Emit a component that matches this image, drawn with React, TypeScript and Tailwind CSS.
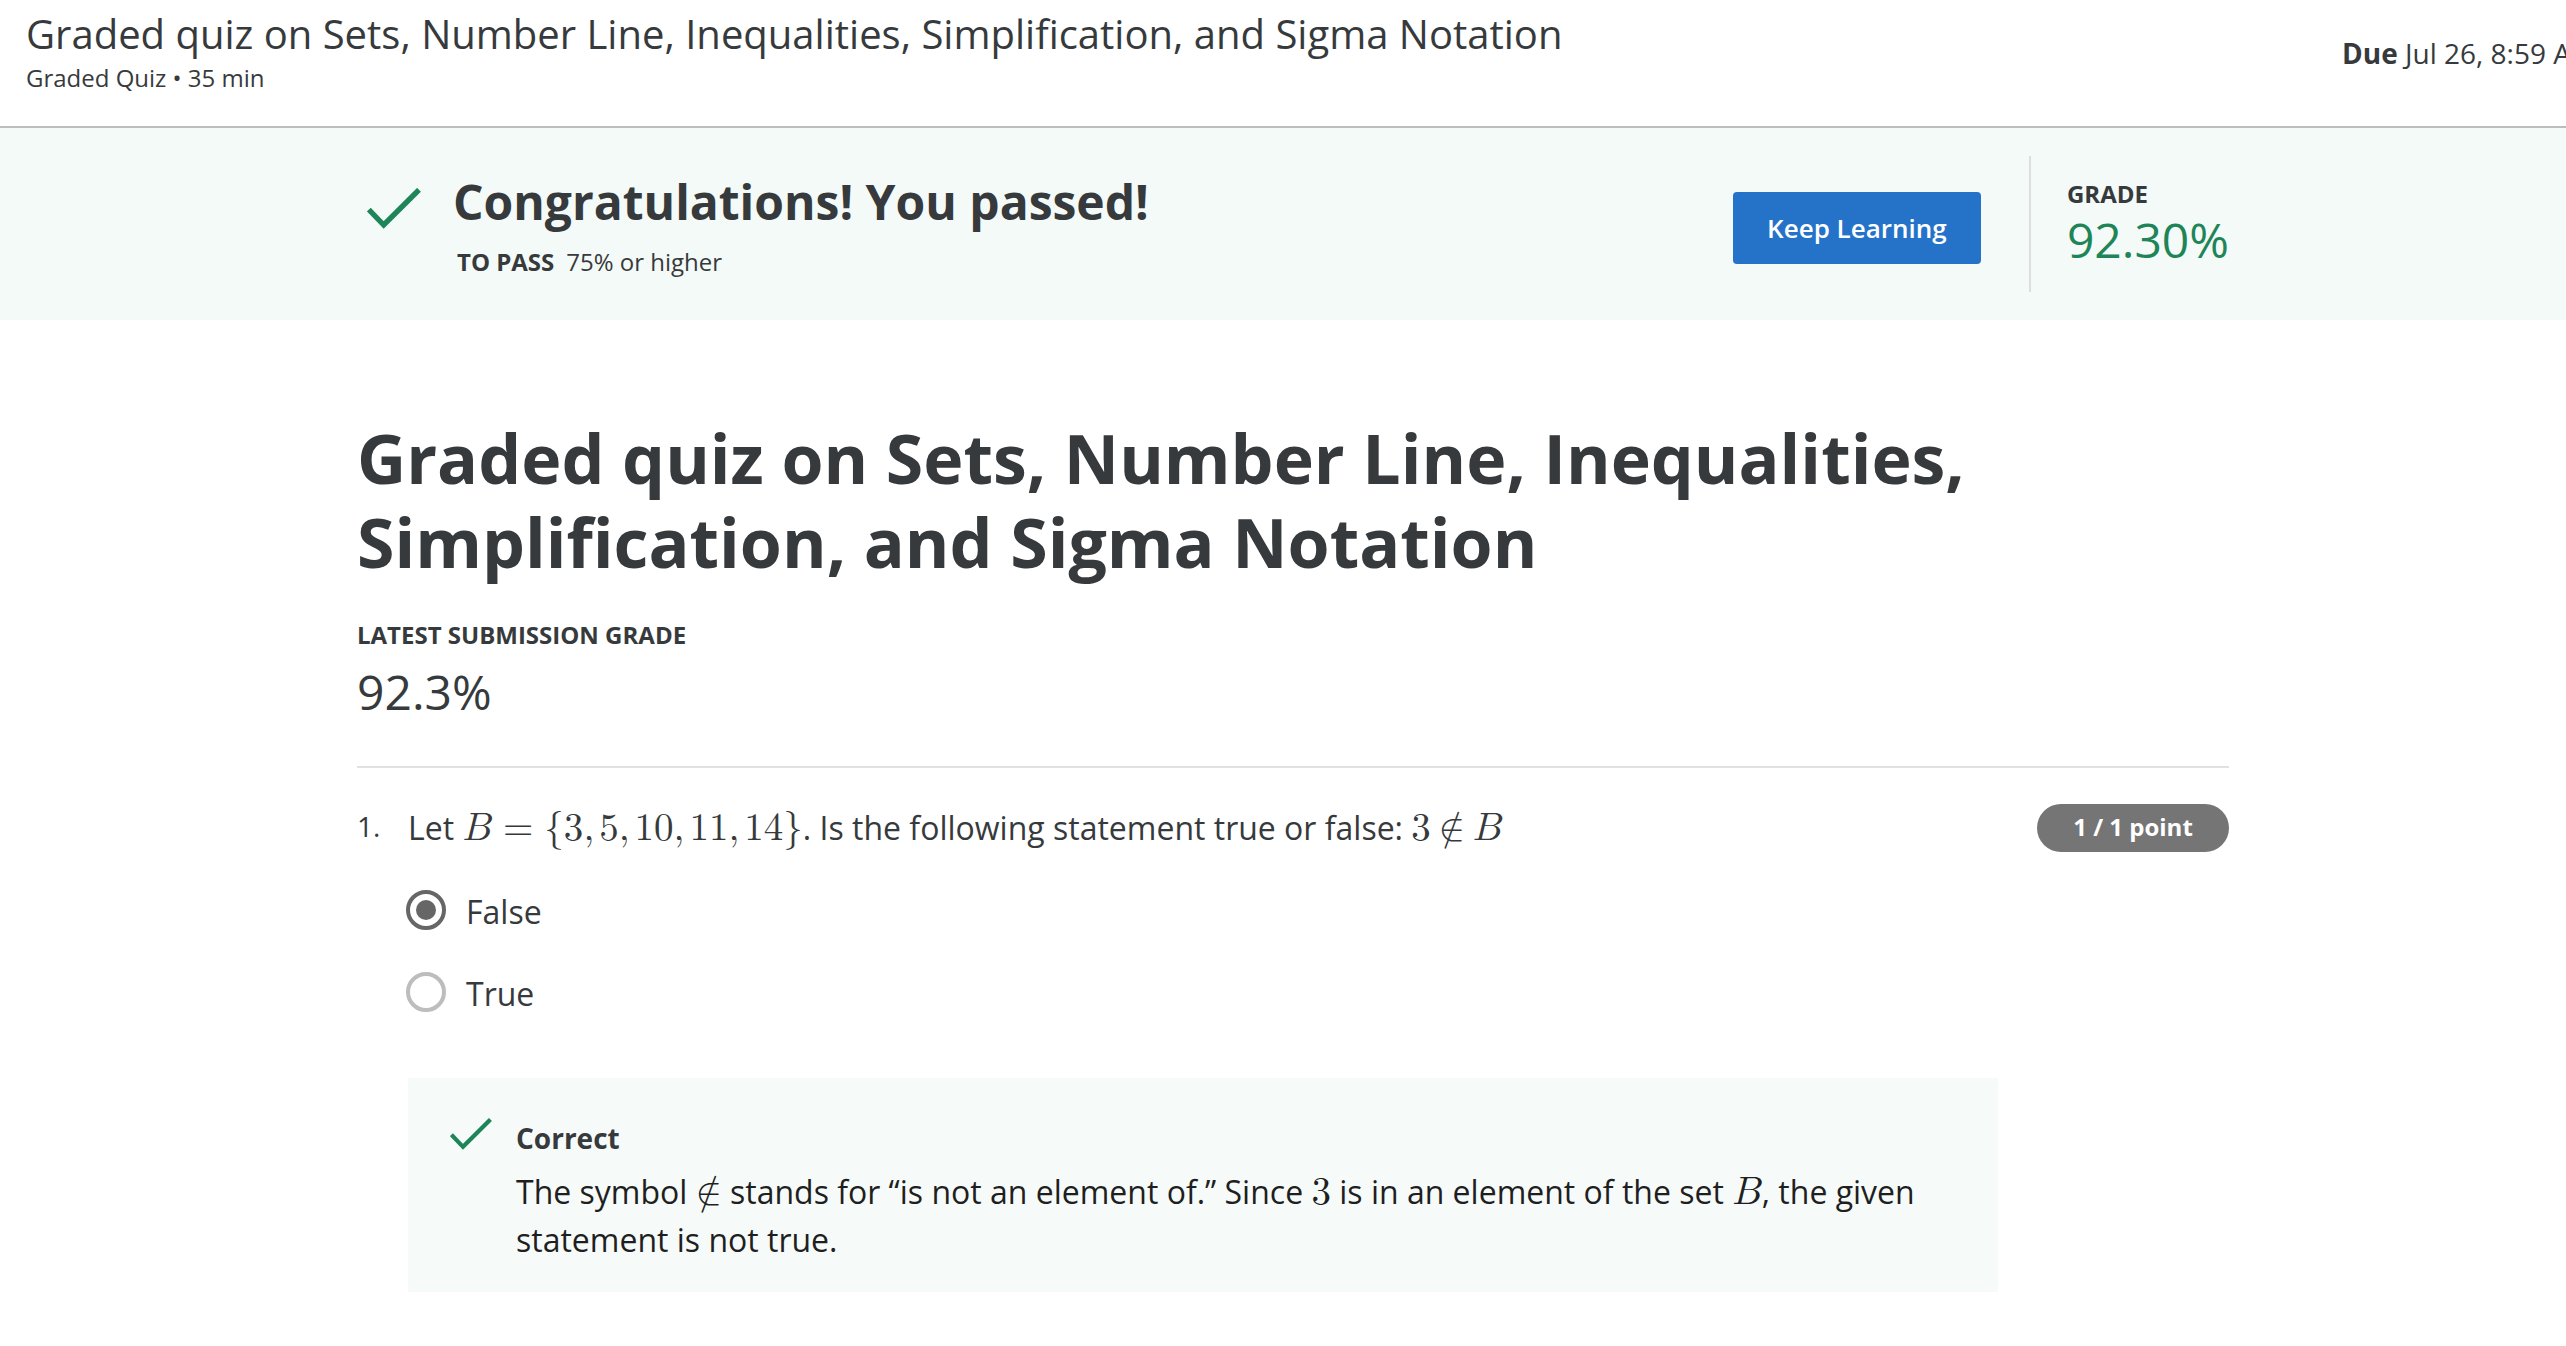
import type { ReactNode } from "react";

function Check({ className }: { className: string }) {
  return (
    <svg viewBox="0 0 54 41" fill="none" aria-hidden="true" className={className}>
      <path d="M1.8 21.5 16.7 37 52 1.8" stroke="#1d8557" strokeWidth="5.4" strokeMiterlimit="10" />
    </svg>
  );
}

function Formula({ children }: { children: ReactNode }) {
  return <span className="font-[math] text-[39px] leading-[0] whitespace-nowrap">{children}</span>;
}

const members = ["3", "5", "10", "11", "14"];

function Option({ label, defaultChecked }: { label: string; defaultChecked?: boolean }) {
  return (
    <label className="flex w-fit items-start">
      <input
        type="radio"
        name="question-1"
        defaultChecked={defaultChecked}
        className="h-10 w-10 shrink-0 appearance-none rounded-full border-4 border-[#bdbdbd] bg-clip-content p-[6px] checked:border-[#666] checked:bg-[#666]"
      />
      <span className="ml-5 text-[32px] leading-[44px]">{label}</span>
    </label>
  );
}

export default function App() {
  return (
    <div className="min-h-screen overflow-hidden bg-white font-['Open_Sans',sans-serif] text-[#373a3c]">
      <header className="flex items-start justify-between border-b-2 border-[#bdbdbd] pt-2 pb-[30px] pl-[26px]">
        <div>
          <div className="text-[40px] leading-[52px]">
            Graded quiz on Sets, Number Line, Inequalities, Simplification, and Sigma Notation
          </div>
          <div className="text-[24px] leading-9">Graded Quiz • 35 min</div>
        </div>
        <div className="mt-[25px] w-[224px] shrink-0 text-[28px] leading-10 whitespace-nowrap">
          <strong>Due</strong> Jul 26, 8:59 AM
        </div>
      </header>

      <section className="bg-[#f4faf8] py-7 pl-5">
        <div className="mx-auto flex max-w-[1872px] items-center">
          <Check className="mr-8 mb-8 ml-[10px] h-[41px] w-[54px]" />
          <div className="flex-1 pt-3">
            <h2 className="text-[48px] leading-[60px] font-bold">Congratulations! You passed!</h2>
            <p className="mt-1 ml-1 text-[24px] leading-[52px]">
              <strong className="mr-3">TO PASS</strong>75% or higher
            </p>
          </div>
          <button
            type="button"
            className="mt-2 h-[72px] w-[248px] rounded-[4px] bg-[#2573c9] text-[26px] font-semibold text-white"
          >
            Keep Learning
          </button>
          <div className="ml-12 flex h-[136px] flex-col justify-center border-l-2 border-[#dcdfde] pl-9">
            <div className="text-[24px] leading-8 font-bold">GRADE</div>
            <div className="text-[48px] leading-[60px] text-[#1d8557]">92.30%</div>
          </div>
        </div>
      </section>

      <main className="pt-[96px] pl-5">
        <div className="mx-auto max-w-[1872px]">
          <h1 className="text-[68px] leading-[84px] font-bold">
            Graded quiz on Sets, Number Line, Inequalities,
            <br />
            Simplification, and Sigma Notation
          </h1>
          <div className="mt-[33px] text-[24px] leading-9 font-bold">LATEST SUBMISSION GRADE</div>
          <div className="mt-[9px] text-[48px] leading-[60px]">92.3%</div>

          <section className="mt-11 flex items-start border-t-2 border-[#e1e1e1] pt-9">
            <div className="w-[51px] shrink-0 text-[28px] leading-[44px]">1.</div>
            <div className="flex-1">
              <div className="flex items-start justify-between">
                <p className="text-[32px] leading-[48px]">
                  Let{" "}
                  <Formula>
                    𝐵<span className="mx-[11px]">=</span>
                    {"{"}
                    {members.map((m, i) => (
                      <span key={m}>
                        {m}
                        {i < members.length - 1 && <span className="mr-[5px]">,</span>}
                      </span>
                    ))}
                    {"}"}
                  </Formula>
                  . Is the following statement true or false:{" "}
                  <Formula>
                    3<span className="mx-2">∉</span>𝐵
                  </Formula>
                </p>
                <span className="h-12 w-[192px] shrink-0 rounded-full bg-[#757575] text-center text-[24px] leading-[46px] font-bold text-white">
                  1 / 1 point
                </span>
              </div>
              <div className="mt-[38px] -ml-0.5 flex flex-col gap-[38px]">
                <Option label="False" defaultChecked />
                <Option label="True" />
              </div>
              <div className="mt-[62px] mr-[231px] flex items-start bg-[#f6fbfa] pt-10 pr-12 pb-7 pl-[42px]">
                <Check className="mr-6 h-8 w-[42px] shrink-0" />
                <div>
                  <div className="text-[28px] leading-10 font-bold">Correct</div>
                  <p className="mt-[10px] text-[32px] leading-[48px] text-[#1f1f1f]">
                    The symbol <Formula>∉</Formula> stands for “is not an element of.” Since <Formula>3</Formula> is in
                    an element of the set <Formula>𝐵</Formula>, the given statement is not true.
                  </p>
                </div>
              </div>
            </div>
          </section>
        </div>
      </main>
    </div>
  );
}
